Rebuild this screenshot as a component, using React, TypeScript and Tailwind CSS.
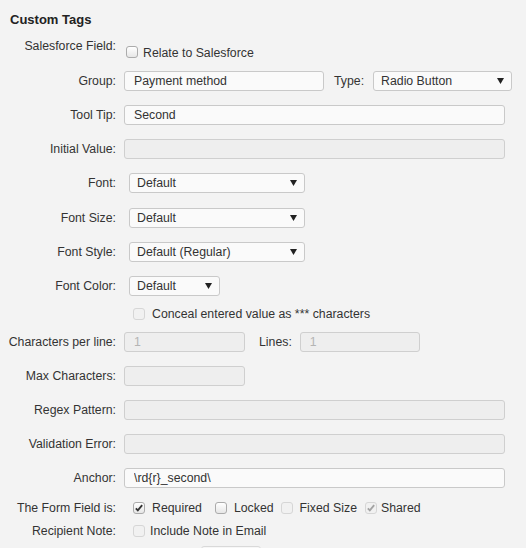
import React from "react";

type Box = { checked?: boolean; disabled?: boolean };

// native-looking checkbox, drawn so it renders the same everywhere
function Check({ checked, disabled }: Box) {
  return (
    <span
      className={
        "relative inline-flex h-[12px] w-[12px] shrink-0 items-center justify-center rounded-[3px] border " +
        (disabled
          ? "border-[#d6d6d6] bg-[#f1f1f1]"
          : "border-[#ababab] bg-gradient-to-b from-[#ffffff] to-[#e6e6e6]")
      }
    >
      {checked && (
        <svg viewBox="0 0 12 12" className="h-[10px] w-[10px]">
          <path
            d="M2.2 6.4 L4.6 8.8 L9.8 2.6"
            fill="none"
            stroke={disabled ? "#a3a3a3" : "#333333"}
            strokeWidth="2.2"
          />
        </svg>
      )}
    </span>
  );
}

function Label({ children }: { children: React.ReactNode }) {
  return <div className="w-[116px] shrink-0 text-right">{children}</div>;
}

function Field({
  value = "",
  width,
  disabled,
}: {
  value?: string;
  width: string;
  disabled?: boolean;
}) {
  return (
    <input
      readOnly
      value={value}
      className={
        "h-[20px] rounded-[3px] border px-[9px] text-[12.3px] outline-none " +
        width +
        (disabled
          ? " border-[#cfcfcf] bg-[#eeeeee] text-[#b4b4b4]"
          : " border-[#c9c9c9] bg-[#fafafa] text-[#333]")
      }
    />
  );
}

function Select({ value, width }: { value: string; width: string }) {
  return (
    <div
      className={
        "flex h-[20px] items-center justify-between rounded-[3px] border border-[#c9c9c9] bg-[#fafafa] pl-[7px] pr-[7px] " +
        width
      }
    >
      <span>{value}</span>
      <svg viewBox="0 0 7 6" className="h-[6px] w-[7px]">
        <path d="M0 0 H7 L3.5 6 Z" fill="#222" />
      </svg>
    </div>
  );
}

function Row({
  label,
  mt,
  children,
}: {
  label?: string;
  mt: string;
  children: React.ReactNode;
}) {
  return (
    <div className={"flex h-[20px] items-center gap-2 " + mt}>
      <Label>{label}</Label>
      {children}
    </div>
  );
}

export default function App() {
  return (
    <div className="h-[548px] w-[526px] overflow-hidden bg-[#f3f3f3] font-['Liberation_Sans',Arial,sans-serif] text-[12.3px] leading-[16px] text-[#333]">
      <div className="pl-[10px] pt-[12px] text-[13px] font-bold leading-[16px] text-[#222]">
        Custom Tags
      </div>

      {/* Salesforce link */}
      <div className="mt-[10px] flex items-start gap-2">
        <Label>Salesforce Field:</Label>
        <div className="ml-[2px] mt-[7px] flex items-center gap-[5px]">
          <span className="-mt-[2px] flex">
            <Check />
          </span>
          <span>Relate to Salesforce</span>
        </div>
      </div>

      <Row label="Group:" mt="mt-[10px]">
        <Field value="Payment method" width="w-[200px]" />
        <span className="ml-[2px]">Type:</span>
        <Select value="Radio Button" width="ml-[1px] w-[139px]" />
      </Row>

      <Row label="Tool Tip:" mt="mt-[14px]">
        <Field value="Second" width="w-[381px]" />
      </Row>

      <Row label="Initial Value:" mt="mt-[14px]">
        <Field width="w-[381px]" disabled />
      </Row>

      <Row label="Font:" mt="mt-[14px]">
        <Select value="Default" width="ml-[5px] w-[176px]" />
      </Row>

      <Row label="Font Size:" mt="mt-[15px]">
        <Select value="Default" width="ml-[5px] w-[176px]" />
      </Row>

      <Row label="Font Style:" mt="mt-[14px]">
        <Select value="Default (Regular)" width="ml-[5px] w-[176px]" />
      </Row>

      <Row label="Font Color:" mt="mt-[14px]">
        <Select value="Default" width="ml-[5px] w-[91px]" />
      </Row>

      <Row mt="mt-[8px]">
        <div className="ml-[9px] flex items-center gap-[7px]">
          <Check disabled />
          <span>Conceal entered value as *** characters</span>
        </div>
      </Row>

      <Row label="Characters per line:" mt="mt-[8px]">
        <Field value="1" width="w-[121px]" disabled />
        <span className="ml-[6px]">Lines:</span>
        <Field value="1" width="w-[120px]" disabled />
      </Row>

      <Row label="Max Characters:" mt="mt-[14px]">
        <Field width="w-[121px]" disabled />
      </Row>

      <Row label="Regex Pattern:" mt="mt-[14px]">
        <Field width="w-[381px]" disabled />
      </Row>

      <Row label="Validation Error:" mt="mt-[14px]">
        <Field width="w-[381px]" disabled />
      </Row>

      <Row label="Anchor:" mt="mt-[14px]">
        <Field value="\rd{r}_second\" width="w-[381px]" />
      </Row>

      <Row label="The Form Field is:" mt="mt-[10px]">
        <div className="ml-[9px] flex items-center">
          <Check checked />
          <span className="ml-[7px]">Required</span>
          <span className="ml-[13px] flex">
            <Check />
          </span>
          <span className="ml-[7px]">Locked</span>
          <span className="ml-[7px] flex">
            <Check disabled />
          </span>
          <span className="ml-[7px]">Fixed Size</span>
          <span className="ml-[8px] flex">
            <Check checked disabled />
          </span>
          <span className="ml-[4px]">Shared</span>
        </div>
      </Row>

      <Row label="Recipient Note:" mt="mt-[3px]">
        <div className="ml-[9px] flex items-center gap-[5px]">
          <Check disabled />
          <span>Include Note in Email</span>
        </div>
      </Row>

      <div className="ml-[201px] mt-[5px] h-[20px] w-[60px] rounded-[3px] border border-[#d9d9d9] bg-[#f7f7f7]" />
    </div>
  );
}
